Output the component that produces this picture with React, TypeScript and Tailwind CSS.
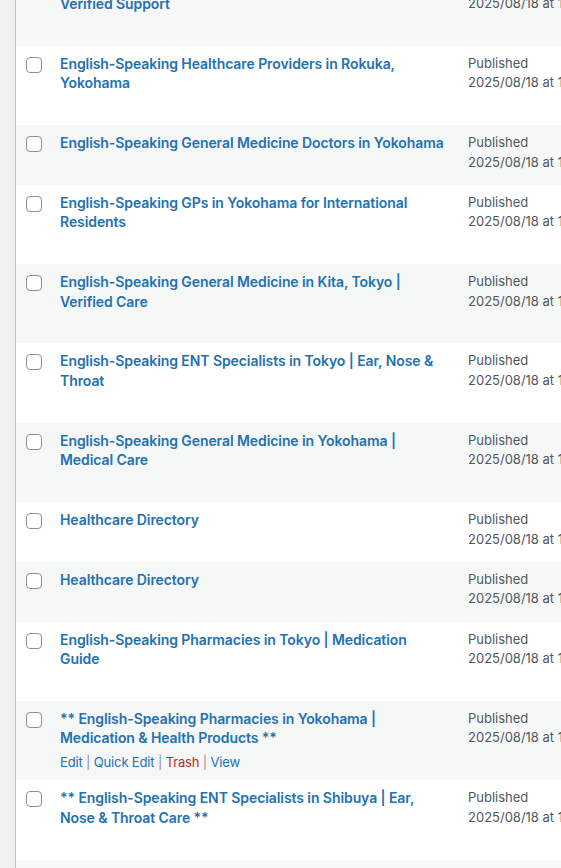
type Post = {
  id: number;
  title: string;
  date: string;
};

const posts: Post[] = [
  { id: 1, title: "English-Speaking Dermatologists in Shinjuku, Tokyo | Verified Support", date: "2025/08/18 at 1:42 pm" },
  { id: 2, title: "English-Speaking Healthcare Providers in Rokuka, Yokohama", date: "2025/08/18 at 1:40 pm" },
  { id: 3, title: "English-Speaking General Medicine Doctors in Yokohama", date: "2025/08/18 at 1:38 pm" },
  { id: 4, title: "English-Speaking GPs in Yokohama for International Residents", date: "2025/08/18 at 1:36 pm" },
  { id: 5, title: "English-Speaking General Medicine in Kita, Tokyo | Verified Care", date: "2025/08/18 at 1:34 pm" },
  { id: 6, title: "English-Speaking ENT Specialists in Tokyo | Ear, Nose & Throat", date: "2025/08/18 at 1:32 pm" },
  { id: 7, title: "English-Speaking General Medicine in Yokohama | Medical Care", date: "2025/08/18 at 1:30 pm" },
  { id: 8, title: "Healthcare Directory", date: "2025/08/18 at 1:28 pm" },
  { id: 9, title: "Healthcare Directory", date: "2025/08/18 at 1:26 pm" },
  { id: 10, title: "English-Speaking Pharmacies in Tokyo | Medication Guide", date: "2025/08/18 at 1:24 pm" },
  { id: 11, title: "** English-Speaking Pharmacies in Yokohama | Medication & Health Products **", date: "2025/08/18 at 1:22 pm" },
  { id: 12, title: "** English-Speaking ENT Specialists in Shibuya | Ear, Nose & Throat Care **", date: "2025/08/18 at 1:20 pm" },
  { id: 13, title: "English-Speaking Dentists in Minato, Tokyo", date: "2025/08/18 at 1:18 pm" },
];

function RowActions({ visible }: { visible: boolean }) {
  return (
    <div
      className={`pt-[4.3px] text-[13px] leading-[20px] tracking-[-0.15px] text-[#8c8f94] ${visible ? "" : "invisible"}`}
    >
      <a className="text-[#2271b1]">Edit</a> |{" "}
      <a className="text-[#2271b1]">Quick Edit</a> |{" "}
      <a className="text-[#b32d2e]">Trash</a> |{" "}
      <a className="text-[#2271b1]">View</a>
    </div>
  );
}

function PostRow({ post, striped, hovered }: { post: Post; striped: boolean; hovered: boolean }) {
  return (
    <div
      className={`grid grid-cols-[34px_408px_200px] ${striped ? "bg-[#f6f7f7]" : "bg-white"}`}
    >
      {/* Checkbox */}
      <div className="pl-[10px] pt-[11px]">
        <span className="block w-4 h-4 rounded-[4px] border border-[#8c8f94] bg-white" />
      </div>

      {/* Title */}
      <div className="px-[10px] py-[8px]">
        <a className="block text-[14px] leading-[19.5px] tracking-[-0.08px] font-semibold text-[#2271b1]">
          {post.title}
        </a>
        <RowActions visible={hovered} />
      </div>

      {/* Date */}
      <div className="px-[10px] py-[8px] text-[13px] leading-[19.5px] text-[#50575e] whitespace-nowrap">
        Published
        <br />
        {post.date}
      </div>
    </div>
  );
}

export default function App() {
  return (
    <div
      className="flex h-[868px] w-[561px] overflow-hidden bg-[#f0f0f1]"
      style={{ fontFamily: "Inter, 'Noto Sans', sans-serif" }}
    >
      <div className="w-[15px] shrink-0 border-r border-[#c3c4c7] box-content" />
      <div className="flex-1 overflow-hidden">
        <div className="-mt-[33.5px] w-[642px]">
          {posts.map((post, i) => (
            <PostRow key={post.id} post={post} striped={i % 2 === 0} hovered={post.id === 11} />
          ))}
        </div>
      </div>
    </div>
  );
}
